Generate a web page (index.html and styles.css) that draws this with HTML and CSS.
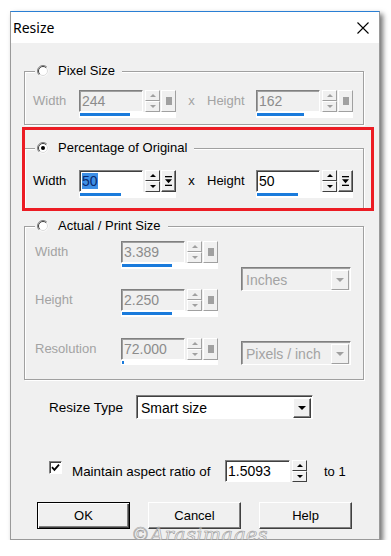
FILE: index.html
```html
<!DOCTYPE html>
<html>
<head>
<meta charset="utf-8">
<title>Resize</title>
<link rel="stylesheet" href="styles.css">
</head>
<body>
<div class="window">
  <div class="titlebar">
    <span class="title">Resize</span>
    <svg class="close" width="12" height="12" viewBox="0 0 12 12"><path d="M0.5 0.5L11.5 11.5M11.5 0.5L0.5 11.5" stroke="#000" stroke-width="1.1" fill="none"/></svg>
  </div>
  <div class="dlg">
    <fieldset class="group g-pixel">
      <legend class="legend">
        <svg class="radio" width="12" height="12" viewBox="0 0 12 12"><circle cx="6" cy="6" r="5.5" fill="#fff"/><path d="M9.9 2.1A5.5 5.5 0 0 0 2.1 9.9" stroke="#808080" fill="none"/><path d="M9.2 2.8A4.5 4.5 0 0 0 2.8 9.2" stroke="#404040" fill="none"/><path d="M2.8 9.2A4.5 4.5 0 0 0 9.2 2.8" stroke="#dcdcdc" fill="none"/></svg>
        <span>Pixel Size</span>
      </legend>
      <div class="dimrow off">
        <span class="lbl">Width</span>
        <div class="numctl off">
          <div class="numtop">
            <span class="field">244</span>
            <span class="spin"><span class="sb up"></span><span class="sb dn"></span></span>
            <span class="sq"></span>
          </div>
          <div class="track"><span class="fill" style="width:50px"></span></div>
        </div>
        <span class="times">x</span>
        <span class="lbl2">Height</span>
        <div class="numctl off">
          <div class="numtop">
            <span class="field">162</span>
            <span class="spin"><span class="sb up"></span><span class="sb dn"></span></span>
            <span class="sq"></span>
          </div>
          <div class="track"><span class="fill" style="width:47px"></span></div>
        </div>
      </div>
    </fieldset>

    <fieldset class="group g-pct">
      <legend class="legend">
        <svg class="radio" width="12" height="12" viewBox="0 0 12 12"><circle cx="6" cy="6" r="5.5" fill="#fff"/><path d="M9.9 2.1A5.5 5.5 0 0 0 2.1 9.9" stroke="#808080" fill="none"/><path d="M9.2 2.8A4.5 4.5 0 0 0 2.8 9.2" stroke="#404040" fill="none"/><path d="M2.8 9.2A4.5 4.5 0 0 0 9.2 2.8" stroke="#dcdcdc" fill="none"/><circle cx="6" cy="6" r="2" fill="#000"/></svg>
        <span>Percentage of Original</span>
      </legend>
      <div class="dimrow">
        <span class="lbl">Width</span>
        <div class="numctl">
          <div class="numtop">
            <span class="field"><span class="sel">50</span></span>
            <span class="spin"><span class="sb up"></span><span class="sb dn"></span></span>
            <span class="sq"><svg width="7" height="10" viewBox="0 0 7 10"><rect x="0" y="0" width="7" height="1.3"/><path d="M0 3.2H7L3.5 7.2Z"/><rect x="0" y="8.7" width="7" height="1.3"/></svg></span>
          </div>
          <div class="track"><span class="fill" style="width:41px"></span></div>
        </div>
        <span class="times">x</span>
        <span class="lbl2">Height</span>
        <div class="numctl">
          <div class="numtop">
            <span class="field">50</span>
            <span class="spin"><span class="sb up"></span><span class="sb dn"></span></span>
            <span class="sq"><svg width="7" height="10" viewBox="0 0 7 10"><rect x="0" y="0" width="7" height="1.3"/><path d="M0 3.2H7L3.5 7.2Z"/><rect x="0" y="8.7" width="7" height="1.3"/></svg></span>
          </div>
          <div class="track"><span class="fill" style="width:41px"></span></div>
        </div>
      </div>
    </fieldset>

    <fieldset class="group g-print">
      <legend class="legend">
        <svg class="radio" width="12" height="12" viewBox="0 0 12 12"><circle cx="6" cy="6" r="5.5" fill="#fff"/><path d="M9.9 2.1A5.5 5.5 0 0 0 2.1 9.9" stroke="#808080" fill="none"/><path d="M9.2 2.8A4.5 4.5 0 0 0 2.8 9.2" stroke="#404040" fill="none"/><path d="M2.8 9.2A4.5 4.5 0 0 0 9.2 2.8" stroke="#dcdcdc" fill="none"/></svg>
        <span>Actual / Print Size</span>
      </legend>
      <div class="printgrid off">
        <span class="lbl pr1">Width</span>
        <div class="numctl off pr1c">
          <div class="numtop">
            <span class="field">3.389</span>
            <span class="spin"><span class="sb up"></span><span class="sb dn"></span></span>
            <span class="sq"></span>
          </div>
          <div class="track"><span class="fill" style="width:50px"></span></div>
        </div>
        <div class="combo off units"><span class="ctext">Inches</span><span class="cbtn"></span></div>
        <span class="lbl pr2">Height</span>
        <div class="numctl off pr2c">
          <div class="numtop">
            <span class="field">2.250</span>
            <span class="spin"><span class="sb up"></span><span class="sb dn"></span></span>
            <span class="sq"></span>
          </div>
          <div class="track"><span class="fill" style="width:50px"></span></div>
        </div>
        <span class="lbl pr3">Resolution</span>
        <div class="numctl off pr3c">
          <div class="numtop">
            <span class="field">72.000</span>
            <span class="spin"><span class="sb up"></span><span class="sb dn"></span></span>
            <span class="sq"></span>
          </div>
          <div class="track"><span class="fill" style="width:2px"></span></div>
        </div>
        <div class="combo off resunits"><span class="ctext">Pixels / inch</span><span class="cbtn"></span></div>
      </div>
    </fieldset>

    <div class="typerow">
      <span class="typelbl">Resize Type</span>
      <div class="combo typecombo"><span class="ctext">Smart size</span><span class="cbtn"></span></div>
    </div>

    <div class="aspectrow">
      <span class="check"><svg width="9" height="9" viewBox="0 0 9 9"><path d="M1 4.2L3.4 6.8L8 1.6" stroke="#000" stroke-width="1.8" fill="none"/></svg></span>
      <span class="aspectlbl">Maintain aspect ratio of</span>
      <span class="field ratio">1.5093</span>
      <span class="spin"><span class="sb up"></span><span class="sb dn"></span></span>
      <span class="tolbl">to 1</span>
    </div>

    <div class="btnrow">
      <span class="btn3d default">OK</span>
      <span class="btn3d">Cancel</span>
      <span class="btn3d">Help</span>
    </div>
  </div>
  <div class="highlight"></div>
  <div class="watermark">©Arasimages</div>
</div>
</body>
</html>
```
FILE: styles.css
```css
body {
  margin: 0;
  background: #fff;
  font-family: "Liberation Sans", Arial, sans-serif;
  font-size: 13px;
  color: #000;
}

.window {
  position: relative;
  box-sizing: border-box;
  width: 370px;
  margin: 11px 0 0 10px;
  background: #f0f0f0;
  border: 1px solid #9a9a9a;
  border-top-color: #2a7fd4;
  box-shadow: 3px 3px 5px rgba(0, 0, 0, 0.55);
}

.titlebar {
  height: 31px;
  background: #fff;
  display: flex;
  align-items: center;
  justify-content: space-between;
  padding: 0 10px 0 2px;
}

.title {
  font-family: "Noto Sans", sans-serif;
  font-size: 14px;
}

.dlg {
  display: flex;
  flex-direction: column;
  padding: 20px 15px 10px 13px;
}

.group {
  box-sizing: border-box;
  width: 340px;
  min-width: 0;
  margin: 0;
  border: 1px solid #a0a0a0;
  box-shadow: inset 1px 1px 0 #fff, 1px 1px 0 #fff;
  padding: 0 6px 0 8px;
}

.legend {
  display: flex;
  align-items: center;
  gap: 9px;
  height: 16px;
  line-height: 16px;
  margin-left: 2px;
  padding: 0 7px 0 2px;
  background: #f0f0f0;
}

.g-pixel { padding-top: 11px; padding-bottom: 6px; margin-bottom: 15px; }
.g-pct { padding-top: 14px; padding-bottom: 10px; margin-bottom: 9px; }
.g-print { padding: 7px 6px 14px 10px; }
.g-print .legend { margin-left: 0; }

.dimrow {
  display: flex;
  align-items: flex-start;
}

.lbl, .lbl2, .times {
  height: 22px;
  line-height: 22px;
}
.lbl { width: 46px; }
.lbl2 { width: 49px; }
.times { width: 31px; text-align: center; }

.off .lbl, .off .lbl2, .off .times, .printgrid .lbl { color: #a3a3a3; }

.numctl {
  display: flex;
  flex-direction: column;
  width: 97px;
}

.numtop {
  display: flex;
  height: 22px;
}

.field {
  box-sizing: border-box;
  display: block;
  width: 64px;
  height: 22px;
  border: 1px solid;
  border-color: #808080 #fff #fff #808080;
  box-shadow: inset 1px 1px 0 #404040;
  background: #fff;
  font-size: 14px;
  line-height: 20px;
  padding-left: 2px;
  color: #000;
}

.numctl.off .field {
  background: #f0f0f0;
  box-shadow: inset 1px 1px 0 #a0a0a0;
  color: #8c8c8c;
}

.sel {
  background: #3d8fe6;
  color: #0b2a6e;
}

.spin {
  box-sizing: border-box;
  display: flex;
  flex-direction: column;
  width: 15px;
  height: 22px;
  margin-left: 2px;
  color: #000;
}

.sb {
  box-sizing: border-box;
  flex: 1;
  display: flex;
  align-items: center;
  justify-content: center;
  background: #f0f0f0;
  border: 1px solid;
  border-color: #fff #404040 #404040 #fff;
}

.sb.up::after {
  content: "";
  border-left: 3px solid transparent;
  border-right: 3px solid transparent;
  border-bottom: 3px solid currentColor;
}

.sb.dn::after {
  content: "";
  border-left: 3px solid transparent;
  border-right: 3px solid transparent;
  border-top: 3px solid currentColor;
}

.off .spin { color: #a0a0a0; }
.off .sb { border-color: #fff #a0a0a0 #a0a0a0 #fff; }

.sq {
  box-sizing: border-box;
  display: flex;
  align-items: center;
  justify-content: center;
  width: 15px;
  height: 22px;
  margin-left: 1px;
  background: #f0f0f0;
  border: 1px solid;
  border-color: #fff #404040 #404040 #fff;
  box-shadow: inset -1px -1px 0 #808080;
}

.off .sq {
  border-color: #fff #a0a0a0 #a0a0a0 #fff;
  box-shadow: none;
}

.off .sq::after {
  content: "";
  width: 6px;
  height: 8px;
  background: #a0a0a0;
}

.track {
  height: 6px;
  background: #fff;
}

.fill {
  display: block;
  height: 3px;
  margin: 1px 0 0 1px;
  background: #1a7bdc;
}

.printgrid {
  display: grid;
  grid-template-columns: 86px 97px 133px;
  grid-template-rows: 28px 28px 28px;
  row-gap: 20px;
}

.pr1 { grid-row: 1; grid-column: 1; }
.pr1c { grid-row: 1; grid-column: 2; }
.pr2 { grid-row: 2; grid-column: 1; }
.pr2c { grid-row: 2; grid-column: 2; }
.pr3 { grid-row: 3; grid-column: 1; margin-top: 1px; }
.pr3c { grid-row: 3; grid-column: 2; margin-top: 1px; }
.units { grid-row: 1 / 3; grid-column: 3; align-self: center; margin-left: 23px; width: 110px; }
.resunits { grid-row: 3; grid-column: 3; align-self: start; margin: 4px 0 0 23px; width: 110px; }

.combo {
  box-sizing: border-box;
  display: flex;
  align-items: center;
  height: 24px;
  border: 1px solid;
  border-color: #808080 #fff #fff #808080;
  box-shadow: inset 1px 1px 0 #404040;
  background: #fff;
  padding: 1px 1px 0 1px;
}

.ctext {
  flex: 1;
  padding-left: 3px;
  font-size: 14px;
  white-space: nowrap;
}

.cbtn {
  box-sizing: border-box;
  display: flex;
  align-items: center;
  justify-content: center;
  width: 18px;
  height: 20px;
  background: #f0f0f0;
  border: 1px solid;
  border-color: #fff #404040 #404040 #fff;
  box-shadow: inset -1px -1px 0 #808080;
  color: #000;
}

.cbtn::after {
  content: "";
  border-left: 4px solid transparent;
  border-right: 4px solid transparent;
  border-top: 4px solid currentColor;
}

.combo.off {
  background: #f0f0f0;
  box-shadow: inset 1px 1px 0 #a0a0a0;
}
.combo.off .ctext { color: #a3a3a3; }
.combo.off .cbtn {
  color: #a0a0a0;
  border-color: #fff #a0a0a0 #a0a0a0 #fff;
  box-shadow: none;
}

.typerow {
  display: flex;
  align-items: center;
  margin: 15px 0 0 25px;
}

.typelbl {
  width: 87px;
  font-size: 13.5px;
}

.typecombo { width: 177px; }

.aspectrow {
  display: flex;
  align-items: center;
  height: 22px;
  margin: 41px 0 0 25px;
}

.check {
  box-sizing: border-box;
  display: flex;
  align-items: center;
  justify-content: center;
  width: 13px;
  height: 13px;
  background: #fff;
  border: 1px solid;
  border-color: #808080 #fff #fff #808080;
  box-shadow: inset 1px 1px 0 #404040;
  margin-bottom: 7px;
}

.aspectlbl {
  margin-left: 10px;
  width: 153px;
  font-size: 13.4px;
}

.field.ratio {
  width: 65px;
}

.tolbl { margin-left: 17px; }

.btnrow {
  display: flex;
  gap: 18px;
  margin: 20px 0 0 13px;
}

.btn3d {
  box-sizing: border-box;
  display: flex;
  align-items: center;
  justify-content: center;
  width: 93px;
  height: 27px;
  background: #f0f0f0;
  border: 1px solid;
  border-color: #fff #404040 #404040 #fff;
  box-shadow: inset -1px -1px 0 #808080;
}

.btn3d.default {
  border-color: #000;
  box-shadow: inset 1px 1px 0 #fff, inset -1px -1px 0 #404040, inset -2px -2px 0 #808080;
}

.highlight {
  position: absolute;
  left: 11px;
  top: 115px;
  width: 352px;
  height: 84px;
  box-sizing: border-box;
  border: 3px solid #ec1c24;
}

.watermark {
  position: absolute;
  left: 120px;
  top: 512px;
  font-family: "DejaVu Serif", serif;
  font-style: italic;
  font-size: 19px;
  line-height: 20px;
  color: rgba(240, 240, 240, 0.45);
  -webkit-text-stroke: 0.6px #9c9c9c;
  letter-spacing: 0.5px;
}
```
